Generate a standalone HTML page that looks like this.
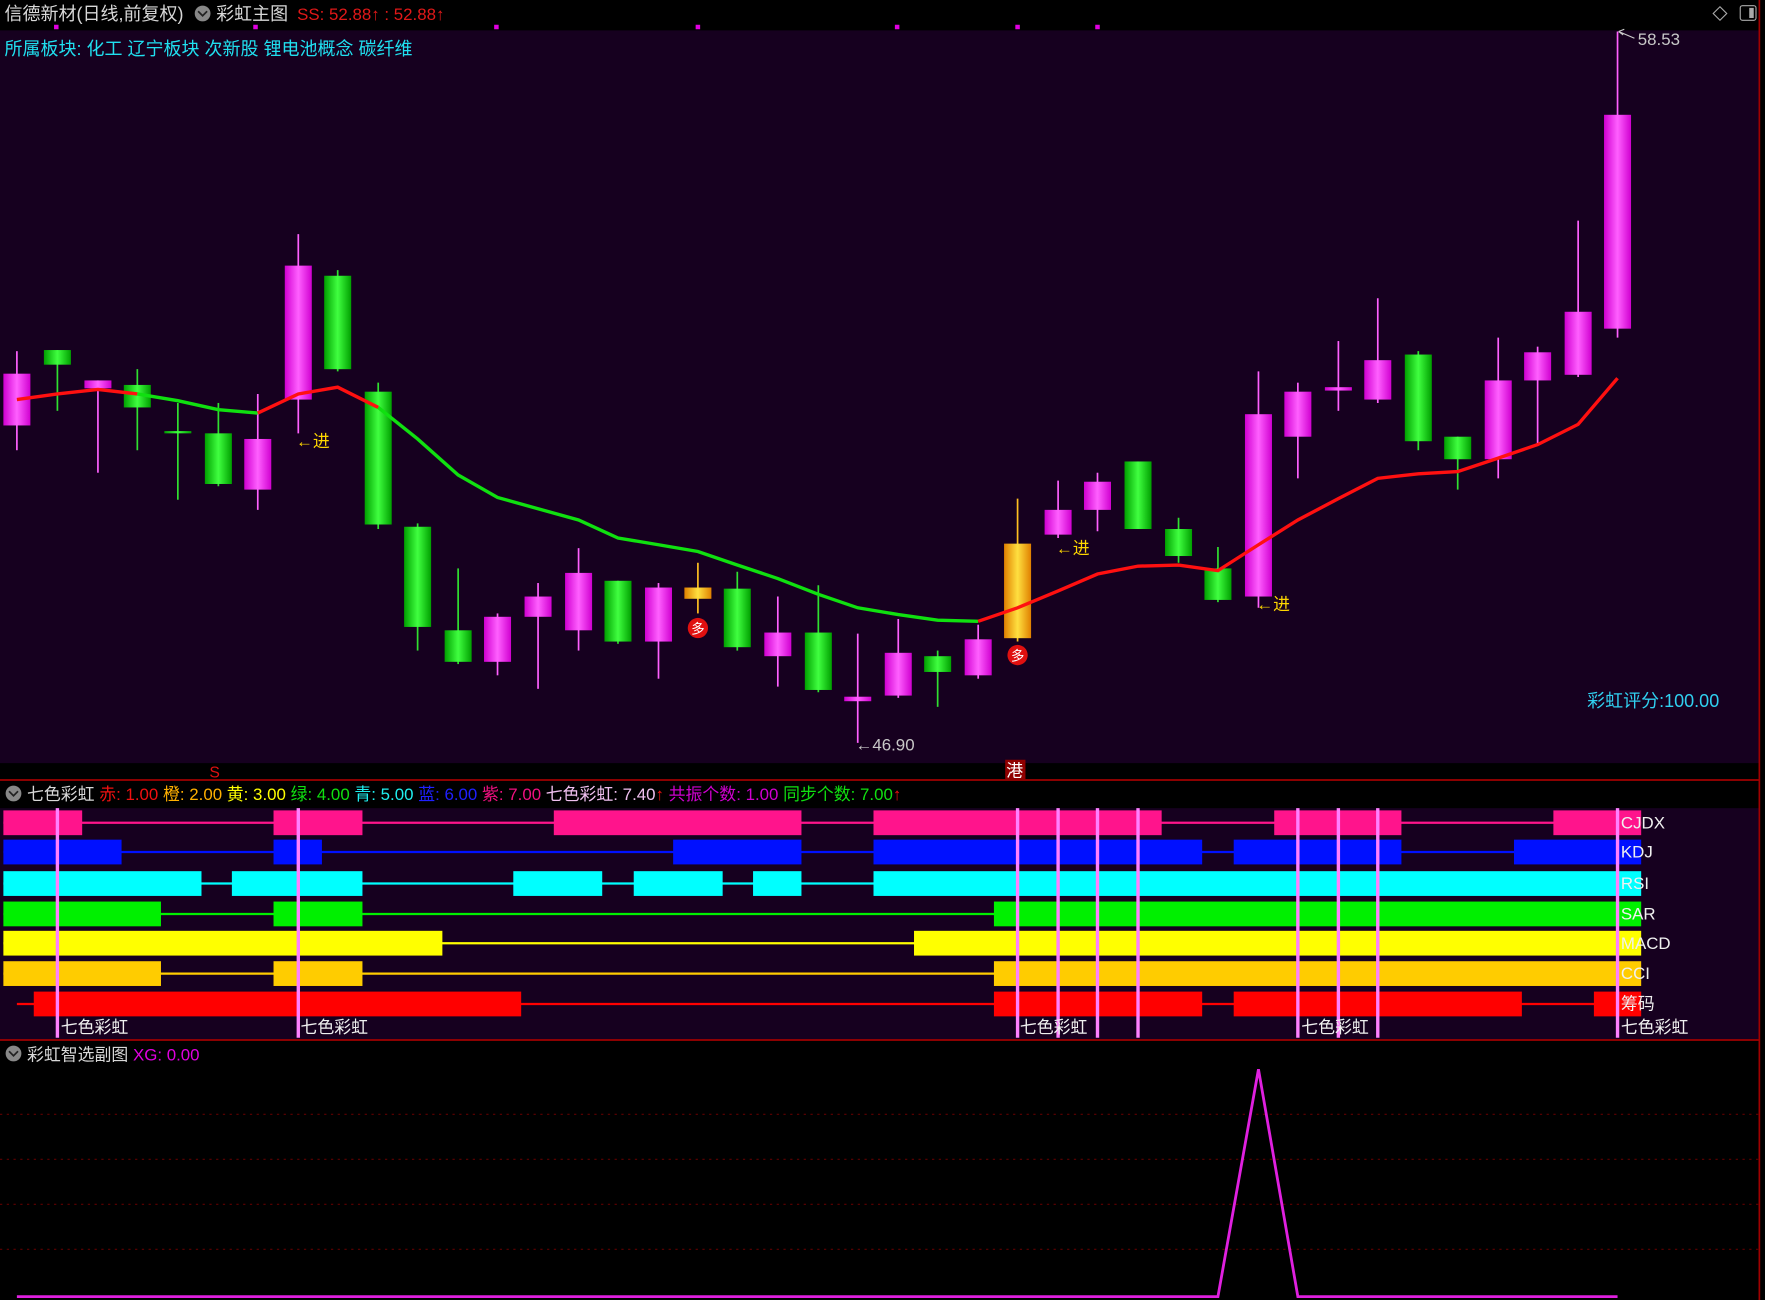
<!DOCTYPE html>
<html><head><meta charset="utf-8"><style>
html,body{margin:0;padding:0;background:#000;width:1765px;height:1300px;overflow:hidden}
svg{display:block}
text{font-family:"Liberation Sans","Noto Sans CJK SC",sans-serif}
</style></head><body>
<svg id="s" width="1765" height="1300" viewBox="0 0 1568 1155" preserveAspectRatio="none" xmlns="http://www.w3.org/2000/svg">
<defs>
<linearGradient id="gm" x1="0" x2="1"><stop offset="0" stop-color="#d000d0"/><stop offset=".5" stop-color="#ff60ff"/><stop offset="1" stop-color="#d000d0"/></linearGradient>
<linearGradient id="gg" x1="0" x2="1"><stop offset="0" stop-color="#00a000"/><stop offset=".5" stop-color="#40ff40"/><stop offset="1" stop-color="#00a000"/></linearGradient>
<linearGradient id="go" x1="0" x2="1"><stop offset="0" stop-color="#e08000"/><stop offset=".5" stop-color="#ffe040"/><stop offset="1" stop-color="#e08000"/></linearGradient>
</defs>
<rect x="0" y="0" width="1568" height="1155" fill="#000"/>
<rect x="0" y="27" width="1563" height="651" fill="#16001f"/>
<rect x="0" y="718" width="1563" height="206" fill="#16001f"/>
<line x1="1563" y1="0" x2="1563" y2="1155" stroke="#a00000" stroke-width="1.5"/>
<line x1="0" y1="693" x2="1563" y2="693" stroke="#a00000" stroke-width="1.5"/>
<line x1="0" y1="924" x2="1563" y2="924" stroke="#a00000" stroke-width="1.5"/>
<g id="dots" fill="#e000e0"></g>
<g id="candles"></g>
<polyline fill="none" stroke="#ff1010" stroke-width="3" points="15,355 51,350 87,346 122,350"/>
<polyline fill="none" stroke="#10e010" stroke-width="3" points="122,350 158,356 194,364 229,367"/>
<polyline fill="none" stroke="#ff1010" stroke-width="3" points="229,367 265,350 300,344 336,362"/>
<polyline fill="none" stroke="#10e010" stroke-width="3" points="336,362 371,390 407,422 442,442 478,452 514,462 549,478 585,484 620,490 655,502 691,514 727,528 762,540 798,546 833,551 869,552"/>
<polyline fill="none" stroke="#ff1010" stroke-width="3" points="869,552 904,540 940,525 975,510 1011,503 1047,502 1082,507 1118,484 1153,462 1189,443 1224,425 1260,421 1295,419 1331,407 1366,395 1402,377 1437,336"/>
<g id="rb"></g>
<g fill="#ffd700" font-size="15">
<text x="263" y="397">←进</text><text x="938" y="492">←进</text><text x="1116" y="542">←进</text></g>
<circle cx="620" cy="558" r="9" fill="#e01010"/><text x="620" y="563" fill="#fff" font-size="12" text-anchor="middle">多</text>
<circle cx="904" cy="582" r="9" fill="#e01010"/><text x="904" y="587" fill="#fff" font-size="12" text-anchor="middle">多</text>
<text x="1455" y="40" fill="#c8c8c8" font-size="15">58.53</text>
<path d="M1438 28 L1452 34 M1438 28 l5 -2 M1438 28 l4 3" stroke="#ccc" fill="none"/>
<text x="760" y="667" fill="#c8c8c8" font-size="15">←46.90</text>
<text x="1410" y="628" fill="#30d0f0" font-size="16">彩虹评分:100.00</text>
<text x="4" y="49" fill="#20e0f0" font-size="16">所属板块: 化工 辽宁板块 次新股 锂电池概念 碳纤维</text>
<text x="4" y="18" fill="#d8d8d8" font-size="16">信德新材(日线,前复权)</text>
<circle cx="180" cy="12" r="7" fill="#888"/><path d="M176 10 l4 4 l4 -4" stroke="#222" stroke-width="1.5" fill="none"/>
<text x="192" y="18" fill="#d8d8d8" font-size="16">彩虹主图</text>
<text x="264" y="18" fill="#e01818" font-size="15">SS: 52.88↑ : 52.88↑</text>
<path d="M1528 6 l6 6 l-6 6 l-6 -6z" stroke="#aaa" fill="none"/>
<rect x="1546" y="5" width="14" height="13" rx="2" stroke="#aaa" fill="none"/><rect x="1554" y="7" width="4" height="9" fill="#aaa"/>
<text x="186" y="691" fill="#e01010" font-size="14">S</text>
<rect x="893" y="675" width="18" height="18" fill="#900000"/><text x="894" y="690" fill="#fff" font-size="15">港</text>
<circle cx="12" cy="705" r="7" fill="#888"/><path d="M8 703 l4 4 l4 -4" stroke="#222" stroke-width="1.5" fill="none"/>
<text x="24" y="711" font-size="15"><tspan fill="#d8d8d8">七色彩虹 </tspan><tspan fill="#f01010">赤: 1.00 </tspan><tspan fill="#ffb000">橙: 2.00 </tspan><tspan fill="#ffff00">黄: 3.00 </tspan><tspan fill="#10e010">绿: 4.00 </tspan><tspan fill="#20f0f0">青: 5.00 </tspan><tspan fill="#2020ff">蓝: 6.00 </tspan><tspan fill="#f01080">紫: 7.00 </tspan><tspan fill="#f0c0f0">七色彩虹: 7.40</tspan><tspan fill="#f01010">↑ </tspan><tspan fill="#d000d0">共振个数: 1.00 </tspan><tspan fill="#10e010">同步个数: 7.00</tspan><tspan fill="#f01010">↑</tspan></text>
<circle cx="12" cy="936" r="7" fill="#888"/><path d="M8 934 l4 4 l4 -4" stroke="#222" stroke-width="1.5" fill="none"/>
<text x="24" y="942" font-size="15"><tspan fill="#d8d8d8">彩虹智选副图 </tspan><tspan fill="#e000e0">XG: 0.00</tspan></text>
<g stroke="#600000" stroke-dasharray="2,4" stroke-width="1"><line x1="0" y1="990" x2="1563" y2="990"/><line x1="0" y1="1030" x2="1563" y2="1030"/><line x1="0" y1="1070" x2="1563" y2="1070"/><line x1="0" y1="1110" x2="1563" y2="1110"/></g>
<polyline fill="none" stroke="#e020e0" stroke-width="2.5" points="15,1152 1082,1152 1118,950 1153,1152 1437,1152"/>
</svg>
<script>
var NS="http://www.w3.org/2000/svg";
function el(p,t,a){var e=document.createElementNS(NS,t);for(var k in a)e.setAttribute(k,a[k]);p.appendChild(e);return e;}
var C=[[15,'m',332,378,312,400],[51,'g',311,324,311,365],[87,'m',338,345,338,420],[122,'g',342,362,328,400],[158,'g',383,385,358,444],[194,'g',385,430,358,432],[229,'m',390,435,350,453],[265,'m',236,355,208,385],[300,'g',245,328,240,330],[336,'g',348,466,340,470],[371,'g',468,557,465,578],[407,'g',560,588,505,590],[442,'m',548,588,545,600],[478,'m',530,548,518,612],[514,'m',509,560,487,578],[549,'g',516,570,516,572],[585,'m',522,570,518,603],[620,'o',522,532,500,545],[655,'g',523,575,508,578],[691,'m',562,583,530,610],[727,'g',562,613,520,615],[762,'m',619,623,563,660],[798,'m',580,618,550,620],[833,'g',583,597,578,628],[869,'m',568,600,555,603],[904,'o',483,567,443,570],[940,'m',453,475,427,478],[975,'m',428,453,420,472],[1011,'g',410,470,410,470],[1047,'g',470,494,460,500],[1082,'g',505,533,486,535],[1118,'m',368,530,330,540],[1153,'m',348,388,340,425],[1189,'m',344,347,303,365],[1224,'m',320,355,265,358],[1260,'g',315,392,312,400],[1295,'g',388,408,388,435],[1331,'m',338,408,300,425],[1366,'m',313,338,308,395],[1402,'m',277,333,196,335],[1437,'m',102,292,28,300]];
var g=document.getElementById('candles');
var wc={m:'#ff60ff',g:'#30e030',o:'#ffc020'};
C.forEach(function(c){el(g,'line',{x1:c[0],x2:c[0],y1:c[4],y2:c[5],stroke:wc[c[1]],'stroke-width':1.5});
el(g,'rect',{x:c[0]-12,y:c[2],width:24,height:Math.max(2,c[3]-c[2]),fill:'url(#g'+c[1]+')'});});
var d=document.getElementById('dots');[50,227,441,620,797,904,975].forEach(function(x){el(d,'rect',{x:x-2,y:22,width:4,height:4});});
var rb=document.getElementById('rb');
var R=[['#ff148c',720,[[3,73],[243,322],[492,712],[776,1032],[1132,1245],[1380,1458]],3],
['#0010ff',746,[[3,108],[243,286],[598,712],[776,1068],[1096,1245],[1345,1458]],3],
['#00ffff',774,[[3,179],[206,322],[456,535],[563,642],[669,712],[776,1458]],3],
['#00f000',801,[[3,143],[243,322],[883,1458]],3],
['#ffff00',827,[[3,393],[812,1458]],3],
['#ffcc00',854,[[3,143],[243,322],[883,1458]],3],
['#ff0000',881,[[30,463],[883,1068],[1096,1352],[1416,1458]],15]];
var names=['CJDX','KDJ','RSI','SAR','MACD','CCI','筹码'];
R.forEach(function(r,i){el(rb,'line',{x1:r[3],x2:1458,y1:r[1]+11,y2:r[1]+11,stroke:r[0],'stroke-width':2});
r[2].forEach(function(s){el(rb,'rect',{x:s[0],y:r[1],width:s[1]-s[0],height:22,fill:r[0]});});
});
[51,265,904,940,975,1011,1153,1189,1224,1437].forEach(function(x){el(rb,'line',{x1:x,x2:x,y1:718,y2:922,stroke:'#ff80ff','stroke-width':3});});
names.forEach(function(n,i){var t=el(rb,'text',{x:1440,y:R[i][1]+16,fill:'#f0f0f0','font-size':15});t.textContent=n;});
[54,267,906,1156,1440].forEach(function(x){var t=el(rb,'text',{x:x,y:918,fill:'#f0f0f0','font-size':15});t.textContent='七色彩虹';});
</script>
</body></html>
